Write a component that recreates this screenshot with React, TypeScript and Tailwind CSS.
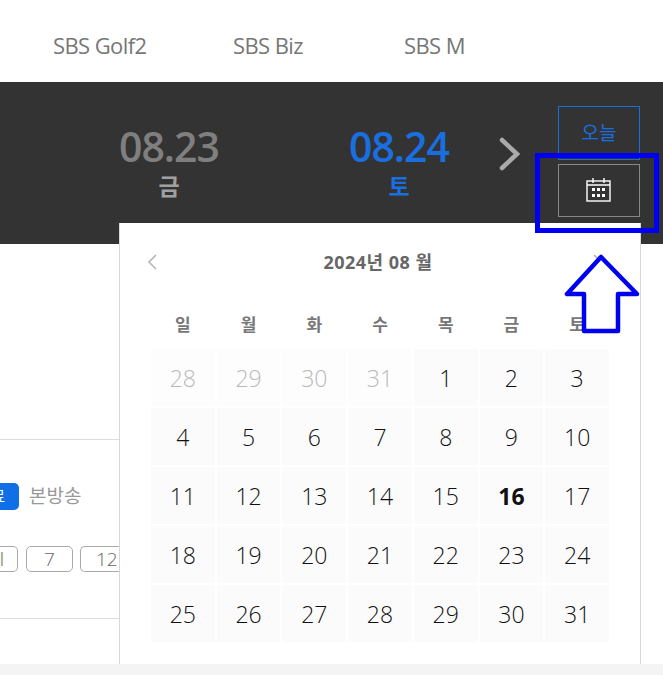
const font = "font-['Open_Sans','Noto_Sans_CJK_KR',sans-serif]";

const weekDays = ["일", "월", "화", "수", "목", "금", "토"];
const days = [
  28, 29, 30, 31, 1, 2, 3, 4, 5, 6, 7, 8, 9, 10, 11, 12, 13, 14, 15, 16, 17, 18, 19, 20, 21, 22,
  23, 24, 25, 26, 27, 28, 29, 30, 31,
];

function DateItem({ date, day, active }: { date: string; day: string; active?: boolean }) {
  return (
    <div className={`flex w-[120px] flex-col items-center ${active ? "text-[#1a6fe0]" : "text-[#7f7f7f]"}`}>
      <span className="text-[41px] font-semibold leading-[46px] tracking-[-1px]">{date}</span>
      <span className={`mt-[2px] text-[23px] font-bold leading-[30px] ${active ? "" : "text-[#a0a0a0]"}`}>{day}</span>
    </div>
  );
}

function Calendar() {
  return (
    <div className="absolute left-[119px] top-[223px] h-[441px] w-[522px] border-x border-[#d8d8d8] bg-white px-[31px]">
      <div className="flex h-[78px] items-center justify-between">
        <svg width="12" height="18" viewBox="0 0 12 18" fill="none" stroke="#b5b5b5" strokeWidth="1.6" className="ml-[-5px]">
          <path d="M10 2 3 9l7 7" />
        </svg>
        <span className="ml-[6px] mt-[1px] text-[18px] font-bold tracking-[0.5px] text-[#666]">2024년 08 월</span>
        <svg width="12" height="18" viewBox="0 0 12 18" fill="none" stroke="#b5b5b5" strokeWidth="1.6" className="mr-[5px]">
          <path d="m2 2 7 7-7 7" />
        </svg>
      </div>
      <div className="grid h-[48px] w-[458px] grid-cols-7 items-center gap-x-[2px] text-center text-[17px] font-bold text-[#777]">
        {weekDays.map((d) => (
          <span key={d}>{d}</span>
        ))}
      </div>
      <div className="grid w-[458px] grid-cols-7 gap-[2px] text-center text-[23px]">
        {days.map((d, i) => (
          <div
            key={i}
            className={`flex h-[57px] items-center justify-center pt-[2px] ${i < 4 ? "bg-[#fdfdfd] text-[#b9b9b9]" : "bg-[#fbfbfb] text-[#111]"} ${d === 16 ? "font-bold" : "font-light"}`}
          >
            {d}
          </div>
        ))}
      </div>
    </div>
  );
}

export default function App() {
  return (
    <div className={`relative h-[675px] w-[663px] overflow-hidden bg-white ${font}`}>
      <nav className="flex h-[82px] items-center pl-[53px] pt-[9px] text-[22px] tracking-[-0.6px] text-[#777]">
        <span className="w-[180px]">SBS Golf2</span>
        <span className="w-[171px]">SBS Biz</span>
        <span>SBS M</span>
      </nav>

      <div className="flex h-[162px] items-start bg-[#333333] pl-[109px] pt-[41px]">
        <DateItem date="08.23" day="금" />
        <div className="w-[110px]" />
        <DateItem date="08.24" day="토" active />
        <svg width="24" height="36" viewBox="0 0 24 36" fill="none" stroke="#aaaaaa" strokeWidth="4.5" strokeLinecap="round" className="ml-[39px] mt-[13px]">
          <path d="m4 4 15 14L4 32" />
        </svg>
        <div className="ml-[36px] mt-[-17px] flex w-[82px] flex-col gap-[4px]">
          <button type="button" className="h-[54px] border border-[#1a6fe0] text-[19px] text-[#1a6fe0]">
            오늘
          </button>
          <button type="button" className="flex h-[53px] items-center justify-center border border-[#888]">
            <svg width="25" height="25" viewBox="0 0 25 25" fill="none" stroke="#fff" strokeWidth="1.4" className="-translate-x-[1px] -translate-y-[1px]">
              <rect x="1" y="4" width="23" height="20" />
              <path d="M1 8h23M7 1v5M18 1v5" />
              <path
                stroke="none"
                fill="#fff"
                d="M6 11h3v3H6zM11 11h3v3h-3zM16 11h3v3h-3zM6 17h3v3H6zM11 17h3v3h-3zM16 17h3v3h-3z"
              />
            </svg>
          </button>
        </div>
      </div>

      <div className="h-[420px] pt-[195px]">
        <div className="flex h-[180px] w-[119px] flex-col overflow-hidden border-y border-[#dddddd]">
          <div className="mt-[43px] flex items-center">
            <span className="flex h-[27px] w-[19px] shrink-0 items-center justify-end overflow-hidden rounded-r-[5px] bg-[#0f6fe6] pr-[14px] text-[15px] text-white">
              <span className="shrink-0">료</span>
            </span>
            <span className="ml-[10px] whitespace-nowrap text-[19px] leading-[27px] text-[#999]">본방송</span>
          </div>
          <div className="mt-[36px] flex gap-[8px] text-[19px] font-light text-[#666]">
            <span className="flex h-[26px] w-[18px] shrink-0 items-center justify-end rounded-r-[5px] border border-l-0 border-[#aaa] pr-[13px]">l</span>
            <span className="flex h-[26px] w-[47px] shrink-0 items-center justify-center rounded-[5px] border border-[#aaa]">7</span>
            <span className="ml-[-1px] flex h-[26px] w-[40px] shrink-0 items-center justify-start rounded-l-[5px] border border-r-0 border-[#aaa] pl-[15px]">12</span>
          </div>
        </div>
      </div>

      <div className="h-[11px] bg-[#f4f4f4]" />

      <Calendar />

      {/* blue annotation drawn over the screenshot */}
      <div className="absolute left-[535px] top-[153px] h-[80px] w-[124px] border-[5px] border-[#0000f0]" />
      <svg width="76" height="80" viewBox="0 0 76 80" fill="#fff" stroke="#0000f0" strokeWidth="4.5" className="absolute left-[564px] top-[254px]">
        <path d="M37 3 3 40h17v37h34V40h19z" strokeLinejoin="round" />
      </svg>
    </div>
  );
}
